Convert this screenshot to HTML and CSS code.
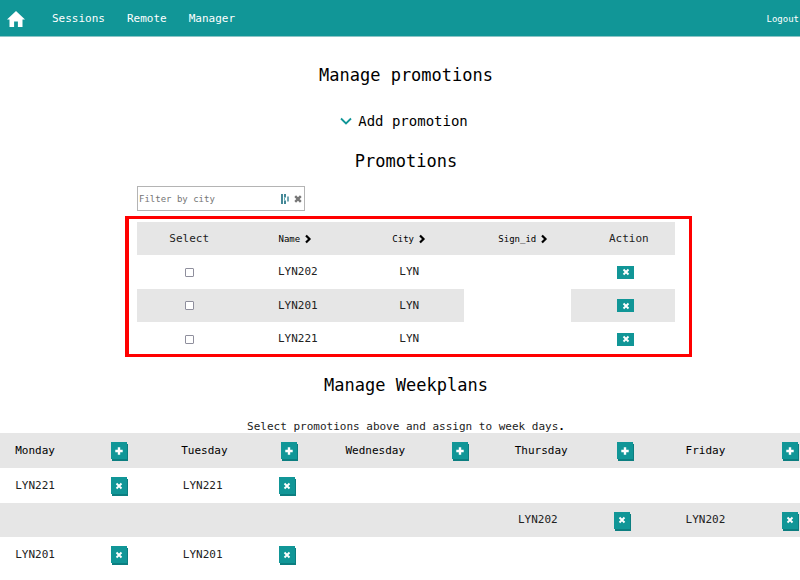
FILE: index.html
```html
<!DOCTYPE html>
<html lang="en">
<head>
<meta charset="utf-8">
<title>Manage promotions</title>
<link rel="stylesheet" href="styles.css">
</head>
<body>
<svg class="defs" aria-hidden="true">
  <symbol id="x" viewBox="0 0 8 8"><path d="M1.5 1.5l5 5M6.5 1.5l-5 5" stroke="currentColor" stroke-width="1.9"/></symbol>
  <symbol id="plus" viewBox="0 0 8 8"><path d="M4 .3v7.4M.3 4h7.4" stroke="currentColor" stroke-width="2.4"/></symbol>
  <symbol id="chevron" viewBox="0 0 8 10"><path d="M2 1.5L5.5 5 2 8.5" fill="none" stroke="currentColor" stroke-width="2.2"/></symbol>
</svg>
<nav class="nav">
  <a class="home" href="#" aria-label="Home"><svg viewBox="0 0 18 16"><path d="M9 0L0 8.6h2.5V16h4.6v-5.5h3.8V16h4.6V8.6H18z" fill="#fff"/></svg></a>
  <a href="#">Sessions</a>
  <a href="#">Remote</a>
  <a href="#">Manager</a>
  <a class="logout" href="#">Logout</a>
</nav>
<main>
  <h1>Manage promotions</h1>
  <button class="expand" type="button"><svg viewBox="0 0 12 8"><path d="M1 1.5l5 5 5-5" fill="none" stroke="#119697" stroke-width="1.8"/></svg>Add promotion</button>
  <section class="promotions">
    <h2>Promotions</h2>
    <div class="filter">
      <input type="text" placeholder="Filter by city" aria-label="Filter by city">
      <svg class="autofill" viewBox="0 0 8 10"><path d="M1 0v10M4 0v3.500M4 6.500v3.500" stroke="#176b7e" stroke-width="1.6"/><path d="M3.500 3.500v3" stroke="#5fb0b4"/><path d="M7 2.500v5" stroke="#176b7e" stroke-width="1.2"/></svg>
      <button type="button" aria-label="Clear filter"><svg viewBox="0 0 8 8"><path d="M1.200 1.200l5.600 5.600M6.800 1.200l-5.600 5.600" stroke="currentColor" stroke-width="2.4"/></svg></button>
    </div>
    <div class="frame">
      <table class="list">
        <colgroup><col class="side"><col class="name"><col class="city"><col class="sign"><col class="side"></colgroup>
        <thead><tr>
          <th>Select</th>
          <th class="sort-name"><button type="button">Name<svg><use href="#chevron"/></svg></button></th>
          <th><button type="button">City<svg><use href="#chevron"/></svg></button></th>
          <th class="shift"><button type="button">Sign_id<svg><use href="#chevron"/></svg></button></th>
          <th class="shift">Action</th>
        </tr></thead>
        <tbody>
          <tr><td><input type="checkbox" aria-label="Select LYN202"></td><td>LYN202</td><td>LYN</td><td class="empty"></td><td class="action"><button class="delete" type="button" aria-label="Delete LYN202"><svg><use href="#x"/></svg></button></td></tr>
          <tr><td><input type="checkbox" aria-label="Select LYN201"></td><td>LYN201</td><td>LYN</td><td class="empty"></td><td class="action"><button class="delete" type="button" aria-label="Delete LYN201"><svg><use href="#x"/></svg></button></td></tr>
          <tr><td><input type="checkbox" aria-label="Select LYN221"></td><td>LYN221</td><td>LYN</td><td class="empty"></td><td class="action"><button class="delete" type="button" aria-label="Delete LYN221"><svg><use href="#x"/></svg></button></td></tr>
        </tbody>
      </table>
    </div>
  </section>
  <h2 class="weekplans">Manage Weekplans</h2>
  <p>Select promotions above and assign to week days<b>.</b></p>
</main>
<div class="week">
  <table>
    <thead><tr>
      <th><div>Monday<button type="button" aria-label="Add to Monday"><svg><use href="#plus"/></svg></button></div></th>
      <th><div>Tuesday<button type="button" aria-label="Add to Tuesday"><svg><use href="#plus"/></svg></button></div></th>
      <th><div>Wednesday<button type="button" aria-label="Add to Wednesday"><svg><use href="#plus"/></svg></button></div></th>
      <th><div>Thursday<button type="button" aria-label="Add to Thursday"><svg><use href="#plus"/></svg></button></div></th>
      <th><div>Friday<button type="button" aria-label="Add to Friday"><svg><use href="#plus"/></svg></button></div></th>
    </tr></thead>
    <tbody>
      <tr>
        <td><div>LYN221<button type="button" aria-label="Remove"><svg><use href="#x"/></svg></button></div></td>
        <td><div>LYN221<button type="button" aria-label="Remove"><svg><use href="#x"/></svg></button></div></td>
        <td></td><td></td><td></td>
      </tr>
      <tr>
        <td></td><td></td><td></td>
        <td><div>LYN202<button type="button" aria-label="Remove"><svg><use href="#x"/></svg></button></div></td>
        <td><div>LYN202<button type="button" aria-label="Remove"><svg><use href="#x"/></svg></button></div></td>
      </tr>
      <tr>
        <td><div>LYN201<button type="button" aria-label="Remove"><svg><use href="#x"/></svg></button></div></td>
        <td><div>LYN201<button type="button" aria-label="Remove"><svg><use href="#x"/></svg></button></div></td>
        <td></td><td></td><td></td>
      </tr>
    </tbody>
  </table>
</div>
</body>
</html>
```
FILE: styles.css
```css
* { box-sizing: border-box; }
body {
  margin: 0;
  background: #fff;
  color: #222;
  font: 11px/14px "DejaVu Sans Mono", monospace;
}
svg { display: block; }
.defs { display: none; }
button {
  margin: 0;
  padding: 0;
  border: 0;
  background: none;
  color: inherit;
  font: inherit;
}

.nav {
  display: flex;
  align-items: center;
  gap: 22px;
  height: 37px;
  padding: 2px 0 0 7px;
  background: #119697;
  border-bottom: 1px solid #8cc5c6;
}
.nav a { color: #fff; text-decoration: none; }
.nav .home { margin-right: 5px; }
.home svg { width: 18px; height: 16px; }
.nav .logout { margin-left: auto; padding-right: 1px; font-size: 9px; }

main { padding: 28px 0 0 12px; text-align: center; }
h1, h2 {
  margin: 0;
  color: #000;
  font-size: 17px;
  font-weight: 400;
  line-height: 20px;
}
.expand {
  display: flex;
  align-items: center;
  gap: 6px;
  margin: 26px auto 20px;
  padding-right: 4px;
  color: #000;
  font-size: 14px;
  line-height: 20px;
}
.expand svg { width: 12px; height: 8px; }

.promotions { max-width: 538px; margin: 0 auto; }
.filter {
  display: flex;
  align-items: center;
  width: 168px;
  height: 25px;
  margin: 15px 0 5px;
  padding: 0 1px;
  border: 1px solid #b4b4b4;
}
.filter input {
  flex: 1;
  min-width: 0;
  padding: 0;
  border: 0;
  outline: 0;
  background: none;
  font: inherit;
  font-size: 9px;
}
.filter input::placeholder { color: #757575; }
.filter .autofill { width: 8px; height: 10px; margin-right: 5px; }
.filter button { padding-right: 1px; color: #777; }
.filter button svg { width: 8px; height: 8px; }

.frame {
  margin: 0 -17px 0 -12px;
  padding: 3px 14px 0 8px;
  border: 3px solid #f00;
  border-left-width: 4px;
}
table { border-collapse: collapse; table-layout: fixed; }
th, td { padding: 0; font-weight: 400; }
.list { width: 100%; }
.side { width: 19.4%; }
.name { width: 21%; }
.city { width: 20.4%; }
.sign { width: 19.8%; }
.list th, .list td { height: 33px; }
.list tbody tr:first-child td { height: 34px; }
.list tbody tr:last-child td { height: 32px; padding-top: 2px; }
.list thead, .list tbody tr:nth-child(2) td { background: #e6e6e6; }
.list tbody tr td.empty { background: #fff; }
.list .shift { padding-left: 12px; }
.list .action { padding-left: 6px; }
.list .sort-name { padding-right: 5px; }
.list th button { display: inline-flex; align-items: center; gap: 4px; font-size: 9px; color: #000; }
.list th svg { width: 8px; height: 10px; }
.list input {
  display: block;
  width: 9px;
  height: 9px;
  margin: 0 auto;
  border: 1px solid #8f8f9d;
  border-radius: 1px;
  background: #fff;
  appearance: none;
}
.list .delete {
  display: block;
  width: 17px;
  height: 13px;
  margin: 0 auto;
  background: #119697;
  color: #fff;
}
.list .delete svg { width: 8px; height: 8px; margin: 0 auto; }

.weekplans { margin: 18px 0 26px; }
p { margin: 0; line-height: 12px; }
b { color: #000; }

.week { overflow: hidden; }
.week table { width: calc(100% + 38px); margin-left: -12px; }
.week th, .week td { height: 35px; }
.week tbody tr:nth-child(2) td { height: 34px; }
.week thead, .week tbody tr:nth-child(2) { background: #e6e6e6; }
.week th { color: #000; }
.week div { display: flex; align-items: center; justify-content: space-around; margin-left: -1px; }
.week button {
  width: 16px;
  height: 17px;
  background: #119697;
  box-shadow: 1px 2px 0 #0c7e80;
  color: #fff;
}
.week button svg { width: 8px; height: 8px; margin: 0 auto; }
```
